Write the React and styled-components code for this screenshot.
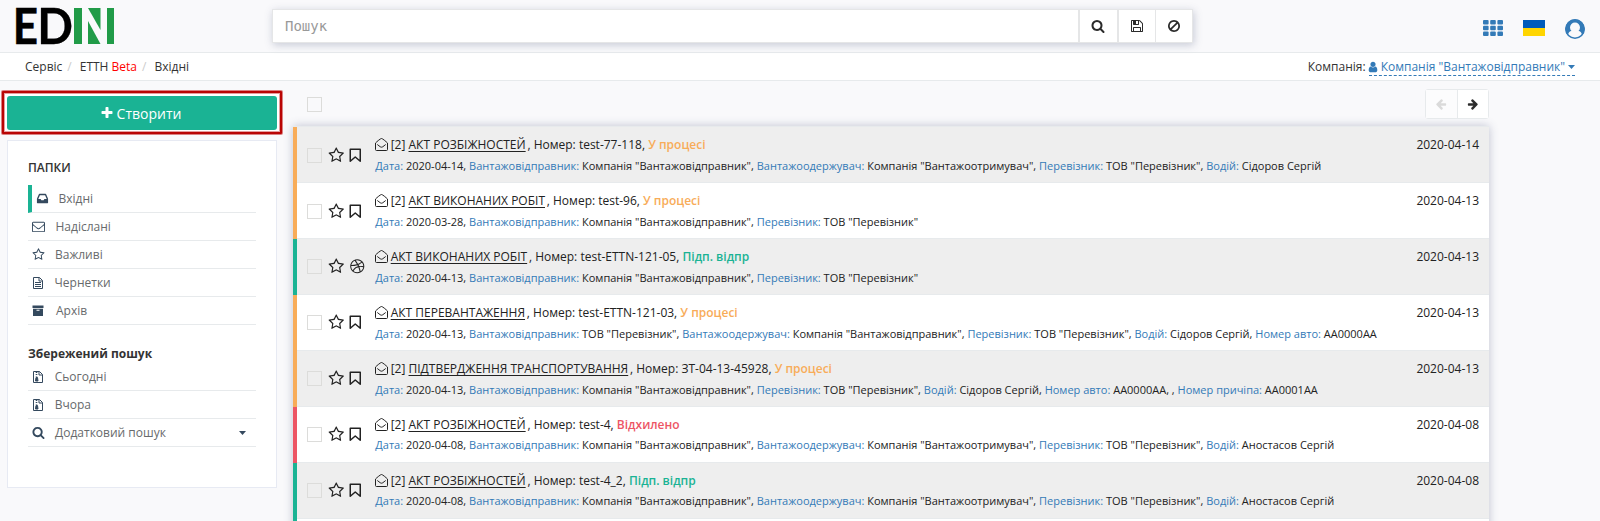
import React from "react";
import styled, { createGlobalStyle, css } from "styled-components";

const GlobalStyle = createGlobalStyle`
  * { box-sizing: border-box; }
  html, body { margin: 0; height: 521px; overflow: hidden; background: #f9f9fb; }
  body { font-family: "Open Sans", "Noto Sans", sans-serif; font-size: 12px; line-height: 1.42857; color: #333; }
  #root { height: 521px; }
  svg { display: block; flex: none; overflow: visible; }
`;

/* ---------- icons ---------- */

const paths = {
  search: "M1216 832q0-185-131.5-316.5t-316.5-131.5-316.5 131.5-131.5 316.5 131.5 316.5 316.5 131.5 316.5-131.5 131.5-316.5zm512 832q0 52-38 90t-90 38q-54 0-90-38l-343-342q-179 124-399 124-143 0-273.5-55.5t-225-150-150-225-55.5-273.5 55.5-273.5 150-225 225-150 273.5-55.5 273.5 55.5 225 150 150 225 55.5 273.5q0 220-124 399l343 343q37 37 37 90z",
  ban: "M1440 893q0-161-87-295l-754 753q137 89 297 89 111 0 211.5-43.5t173.5-116.5 116-174.5 43-212.5zm-999 299l755-754q-135-91-300-91-148 0-273 73t-198 199-73 274q0 162 89 299zm1223-299q0 157-61 300t-163.5 246-245 164-298.5 61-298.5-61-245-164-163.5-246-61-300 61-299.5 163.5-245.5 245-164 298.5-61 298.5 61 245 164 163.5 245.5 61 299.5z",
  plus: "M1600 736v192q0 40-28 68t-68 28h-416v416q0 40-28 68t-68 28h-192q-40 0-68-28t-28-68v-416h-416q-40 0-68-28t-28-68v-192q0-40 28-68t68-28h416v-416q0-40 28-68t68-28h192q40 0 68 28t28 68v416h416q40 0 68 28t28 68z",
  star: "M1201 1004l306-297-422-62-189-382-189 382-422 62 306 297-73 421 378-199 377 199zm527-357q0 22-26 48l-363 354 86 500q1 7 1 20 0 50-41 50-19 0-40-12l-449-236-449 236q-22 12-40 12-21 0-31.5-14.5t-10.5-35.5q0-6 2-20l86-500-364-354q-25-27-25-48 0-37 56-46l502-73 225-455q19-41 49-41t49 41l225 455 502 73q56 9 56 46z",
  floppy: "M512 1536h768v-384h-768v384zm896 0h128v-896q0-14-10-38.5t-20-34.5l-281-281q-10-10-34-20t-39-10v416q0 40-28 68t-68 28h-576q-40 0-68-28t-28-68v-416h-128v1280h128v-416q0-40 28-68t68-28h832q40 0 68 28t28 68v416zm-384-928v-320q0-13-9.5-22.5t-22.5-9.5h-192q-13 0-22.5 9.5t-9.5 22.5v320q0 13 9.5 22.5t22.5 9.5h192q13 0 22.5-9.5t9.5-22.5zm640 32v928q0 40-28 68t-68 28h-1344q-40 0-68-28t-28-68v-1344q0-40 28-68t68-28h928q40 0 88 20t76 48l280 280q28 28 48 76t20 88z",
  envelope: "M1664 1504v-768q-32 36-69 66-268 206-426 338-51 43-83 67t-86.5 48.5-102.5 24.5h-2q-48 0-102.5-24.5t-86.5-48.5-83-67q-158-132-426-338-37-30-69-66v768q0 13 9.5 22.5t22.5 9.5h1472q13 0 22.5-9.5t9.5-22.5zm0-1051v-24.5l-.5-13-3-12.5-5.5-9-9-7.5-14-2.5h-1472q-13 0-22.5 9.5t-9.5 22.5q0 168 147 284 193 152 401 317 6 5 35 29.5t46 37.5 44.5 31.5 50.5 27.5 43 9h2q20 0 43-9t50.5-27.5 44.5-31.5 46-37.5 35-29.5q208-165 401-317 54-43 100.5-115.5t46.5-131.5zm128-37v1088q0 66-47 113t-113 47h-1472q-66 0-113-47t-47-113v-1088q0-66 47-113t113-47h1472q66 0 113 47t47 113z",
  inbox: "M1151 960h316q-1-3-2.5-8t-2.5-8l-212-496h-708l-212 496q-1 2-2.5 8t-2.5 8h316l95 192h320zm513 30v482q0 26-19 45t-45 19h-1408q-26 0-45-19t-19-45v-482q0-62 25-123l238-552q10-25 36.5-42t52.5-17h832q26 0 52.5 17t36.5 42l238 552q25 61 25 123z",
  user: "M1536 1399q0 109-62.5 187t-150.5 78h-854q-88 0-150.5-78t-62.5-187q0-85 8.5-160.5t31.5-152 58.5-131 94-89 134.5-34.5q131 128 313 128t313-128q76 0 134.5 34.5t94 89 58.5 131 31.5 152 8.5 160.5zm-256-887q0 159-112.5 271.5t-271.5 112.5-271.5-112.5-112.5-271.5 112.5-271.5 271.5-112.5 271.5 112.5 112.5 271.5z",
  left: "M1664 896v128q0 53-32.5 90.5t-84.5 37.5h-704l293 294q38 36 38 90t-38 90l-75 76q-37 37-90 37-52 0-91-37l-651-652q-37-37-37-90 0-52 37-91l651-650q38-38 91-38 52 0 90 38l75 74q38 38 38 91t-38 91l-293 293h704q52 0 84.5 37.5t32.5 90.5z",
  dribbble: "M1152 1500q-42-241-140-498h-2l-2 1q-16 6-43 16.5t-101 49-137 82-131 114.5-103 148l-15-11q184 150 418 150 132 0 256-52zm-185-607q-21-49-53-111-311 93-673 93-1 7-1 21 0 124 44 236.5t124 201.5q50-89 123.5-166.5t142.5-124.5 130.5-81 99.5-48l37-13q4-1 13-3.5t13-4.5zm-107-212q-120-213-244-378-138 65-234 186t-128 272q302 0 606-80zm684 319q-210-60-409-29 87 239 128 469 111-75 185-189.5t96-250.5zm-805-741q-1 0-2 1 1-1 2-1zm590 145q-185-164-433-164-76 0-155 19 131 170 246 382 69-26 130-60.5t96.5-61.5 65.5-57 37.5-40.5zm223 485q-3-232-149-410l-1 1q-9 12-19 24.5t-43.5 44.5-71 60.5-100 65-131.5 64.5q25 53 44 95 2 5 6.5 17t7.5 17q36-5 74.5-7t73.5-2 69 1.5 64 4 56.5 5.5 48 6.5 36.5 6 25 4.5zm112 7q0 209-103 385.5t-279.5 279.5-385.5 103-385.5-103-279.5-279.5-103-385.5 103-385.5 279.5-279.5 385.5-103 385.5 103 279.5 279.5 103 385.5z",
};

const Glyph = ({ name, size = 14, flip }) => (
  <svg width={size} height={size} viewBox="0 0 1792 1792" fill="currentColor">
    <path d={paths[name]} transform={flip ? "translate(1792 0) scale(-1 1)" : undefined} />
  </svg>
);

const FileIcon = ({ zip }) => (
  <svg width="12" height="14" viewBox="0 0 12 14" fill="none" stroke="currentColor">
    <path d="M1.5 1.5h6l3 3v8h-9z M7 1.5v3.5h3.5" />
    {zip ? (
      <>
        <path d="M4.5 2v4.500" strokeDasharray="1 1" strokeWidth="1.6" />
        <path d="M4 7.500h1.500l.5 3.500h-2.500z" fill="currentColor" />
      </>
    ) : (
      <path d="M3 6.500h6M3 8.500h6M3 10.500h6" />
    )}
  </svg>
);

const ArchiveIcon = () => (
  <svg width="12" height="12" viewBox="0 0 12 12">
    <path fill="currentColor" d="M.5.500h11v2.500H.500zM1 3.800h10v7.200H1zM4.500 4.800v1h3v-1z" fillRule="evenodd" />
  </svg>
);

const BookmarkIcon = () => (
  <svg width="13" height="15" viewBox="0 0 13 15" fill="none" stroke="currentColor" strokeWidth="1.5">
    <path d="M1.250 1.250h10v12l-5-4.300-5 4.300z" strokeLinejoin="round" />
  </svg>
);

const OpenMailIcon = () => (
  <svg width="13" height="13" viewBox="0 0 13 13" fill="none" stroke="currentColor">
    <path d="M.5 5C2 3.500 5.500.500 6.500.500S11 3.500 12.500 5v6.500a1 1 0 0 1-1 1h-10a1 1 0 0 1-1-1z" />
    <path d="M2.300 6.500C5 8.600 5.600 9.200 6.500 9.200S8 8.600 10.700 6.500" />
  </svg>
);

const Caret = () => (
  <svg width="7" height="4" viewBox="0 0 7 4">
    <path d="M0 0h7L3.500 4z" fill="currentColor" />
  </svg>
);

const GridIcon = () => (
  <svg width="20" height="16" viewBox="0 0 20 16" fill="currentColor">
    {[0, 5.7, 11.4].map((y) =>
      [0, 7.2, 14.4].map((x) => <rect key={x + "-" + y} x={x} y={y} width="5.600" height="4.600" rx="1" />)
    )}
  </svg>
);

const AccountIcon = () => (
  <svg width="20" height="20" viewBox="0 0 20 20">
    <circle cx="10" cy="10" r="9.200" fill="none" stroke="currentColor" strokeWidth="1.500" />
    <path fill="currentColor" fillRule="evenodd" d="M10 .5a9.500 9.500 0 0 0-7.200 15.700c.6-2.400 1.700-4.200 3.700-4.200a5 5 0 1 1 7 0c2 0 3.100 1.800 3.700 4.200A9.500 9.500 0 0 0 10 .5z" />
    <circle cx="10" cy="8.300" r="3.900" fill="#f9f9fb" />
  </svg>
);

const Logo = () => (
  <svg width="100" height="38" viewBox="0 0 100 38" fontFamily="Lato" fontWeight="700" fontSize="50">
    <text transform="translate(-2.300 37) scale(.88 1)" stroke="#000" strokeWidth=".5">E</text>
    <text transform="translate(22.200 37) scale(.94 1)" stroke="#000" strokeWidth=".3">D</text>
    <g fill="#219b48">
      <rect x="59" y="1" width="8" height="36" />
      <path d="M73 14v23h12.500z" />
      <path d="M73 1h12.500v22z" />
      <rect x="92" y="1" width="7" height="36" />
    </g>
  </svg>
);

/* ---------- header ---------- */

const Header = styled.header`
  height: 53px;
  display: flex;
  align-items: flex-start;
  border-bottom: 1px solid #e7eaec;
  padding: 7px 15px 0 15px;
`;

const SearchBar = styled.div`
  display: flex;
  width: 921px;
  height: 34px;
  margin: 2px 0 0 157px;
  border: 1px solid #e5e6e7;
  background: #fff;
  box-shadow: 1px 2px 8px rgba(70, 80, 120, 0.28);
`;

const SearchInput = styled.div`
  flex: 1;
  padding-left: 12px;
  font: 14px/32px "DejaVu Sans Mono", monospace;
  color: #999;
`;

const SearchButton = styled.div`
  width: ${(p) => p.$width}px;
  border-left: ${(p) => (p.$thick ? 2 : 1)}px solid #e5e6e7;
  display: flex;
  align-items: center;
  justify-content: center;
  padding-right: 1px;
  color: #2b2b2b;
`;

const HeaderTools = styled.div`
  margin: 12px 0 0 auto;
  display: flex;
  align-items: flex-start;
  gap: 20px;
  color: #337ab7;
  svg:first-child { margin-top: 1px; }
`;

const Flag = styled.div`
  width: 22px;
  height: 16px;
  margin-top: 1px;
  background: linear-gradient(#005bbb 50%, #ffd500 50%);
`;

const Crumbs = styled.nav`
  height: 28px;
  display: flex;
  align-items: center;
  padding: 0 25px;
  background: #fff;
  border-bottom: 1px solid #e7eaec;
  white-space: pre;
`;

const Slash = styled.span`
  color: #ccc;
  padding: 0 8px 0 5px;
`;

const Beta = styled.span`
  color: red;
`;

const CompanyLabel = styled.span`
  margin-left: auto;
  margin-right: 3px;
`;

const CompanyLink = styled.a`
  display: flex;
  align-items: center;
  height: 18px;
  margin-top: 1px;
  color: #337ab7;
  border-bottom: 1px dashed #337ab7;
  gap: 3px;
  svg:first-child { margin-left: -2px; margin-right: -1px; }
`;

/* ---------- sidebar ---------- */

const Body = styled.main`
  display: flex;
  height: 440px;
  align-items: flex-start;
  overflow: hidden;
`;

const Sidebar = styled.aside`
  width: 293px;
  flex: none;
  padding-top: 10px;
`;

const CreateFrame = styled.div`
  width: 280px;
  height: 43px;
  border: 2px solid #b90504;
  border-radius: 1px;
  box-shadow: 0 0 0 1px rgba(190, 10, 10, 0.5), inset 0 0 0 1px rgba(190, 10, 10, 0.4);
  background: #fff;
  margin-left: 2px;
  padding: 3px 3px 2px;
`;

const CreateButton = styled.button`
  display: flex;
  align-items: center;
  justify-content: center;
  gap: 3px;
  width: 100%;
  height: 34px;
  padding: 0 8px 0 5px;
  border: 0;
  border-radius: 3px;
  background: #1ab394;
  color: #fff;
  font: 14px "Open Sans", sans-serif;
`;

const Folders = styled.section`
  width: 270px;
  height: 348px;
  margin: 6px 0 0 7px;
  padding: 17px 20px 0;
  background: #fff;
  border: 1px solid #e7eaf3;
`;

const FolderTitle = styled.h5`
  height: ${(p) => p.$height}px;
  margin: ${(p) => p.$top || 0}px 0 0;
  font-size: 12px;
  line-height: 20px;
  font-weight: 600;
  ${(p) => p.$bold && css`font-weight: 700;`}
`;

const Folder = styled.div`
  display: flex;
  align-items: center;
  height: 28px;
  border-bottom: 1px solid #e7eaec;
  border-left: ${(p) => (p.$active ? "4px solid #1ab394" : "0")};
  padding-left: 4px;
  padding-right: 10px;
  color: #676a6c;
  > svg:last-child { margin-left: auto; color: #34495e; }
`;

const FolderIcon = styled.span`
  width: ${(p) => p.$width}px;
  color: #34495e;
`;

/* ---------- documents ---------- */

const Content = styled.section`
  width: 1196px;
`;

const Toolbar = styled.div`
  display: flex;
  justify-content: space-between;
  height: 45px;
  padding: 8px 0 0 14px;
`;

const Checkbox = styled.span`
  display: block;
  width: 15px;
  height: 15px;
  flex: none;
  border: 1px solid #dcdcda;
  margin-top: ${(p) => p.$top || 0}px;
`;

const Pager = styled.div`
  display: flex;
  width: 64px;
  height: 30px;
  border: 1px solid #e7eaec;
  border-radius: 3px;
  background: #fff;
`;

const PagerButton = styled.div`
  flex: 1;
  display: flex;
  align-items: center;
  justify-content: center;
  color: ${(p) => (p.$disabled ? "#dadada" : "#2b2b2b")};
  background: ${(p) => (p.$disabled ? "#fcfcfd" : "#fff")};
  & + & { border-left: 1px solid #e7eaec; }
`;

const List = styled.div`
  padding-top: 1px;
  background: #e7eaec;
  box-shadow: 0 0 9px rgba(70, 80, 120, 0.32);
`;

const tones = { orange: "#f8ac59", green: "#1ab394", red: "#ed5565" };

const Row = styled.article`
  display: flex;
  height: 56px;
  border-left: 4px solid ${(p) => tones[p.$tone]};
  background: ${(p) => (p.$shade ? "#eee" : "#fff")};
  box-shadow: inset 0 -1px #e7eaec;
  padding: 0 10px;
  color: #222;
`;

const Marks = styled.div`
  display: flex;
  align-items: center;
  width: 68px;
  height: ${(p) => (p.$raised ? 55 : 57)}px;
  flex: none;
  gap: 6px;
  svg:last-child { margin-left: -2px; }
`;

const Details = styled.div`
  flex: 1;
  white-space: nowrap;
`;

const Headline = styled.div`
  display: flex;
  align-items: center;
  height: 21px;
  margin-top: 7px;
  white-space: pre;
  svg { margin-right: 2.700px; }
`;

const DocLink = styled.a`
  text-decoration: underline;
  text-underline-offset: 2px;
  margin-right: 1.800px;
`;

const Status = styled.span`
  color: ${(p) => tones[p.$tone]};
  font-weight: 600;
`;

const Fields = styled.div`
  font-size: 11px;
  line-height: 20px;
  margin-top: ${(p) => (p.$tight ? 0 : 1)}px;
  padding-left: 0.25px;
`;

const Key = styled.span`
  color: #337ab7;
`;

const RowDate = styled.time`
  line-height: 21px;
  margin-top: 7px;
`;

const D = "Дата", S = "Вантажовідправник", R = "Вантажоодержувач", C = "Перевізник", W = "Водій", A = "Номер авто";
const sender = 'Компанія "Вантажовідправник"', receiver = 'Компанія "Вантажоотримувач"', carrier = 'ТОВ "Перевізник"';

const documents = [
  { tone: "orange", count: "[2] ", title: "АКТ РОЗБІЖНОСТЕЙ", number: "test-77-118", status: "У процесі", date: "2020-04-14",
    fields: [[D, "2020-04-14"], [S, sender], [R, receiver], [C, carrier], [W, "Сідоров Сергій"]] },
  { tone: "orange", count: "[2] ", title: "АКТ ВИКОНАНИХ РОБІТ", number: "test-96", status: "У процесі", date: "2020-04-13",
    fields: [[D, "2020-03-28"], [S, sender], [C, carrier]] },
  { tone: "green", ball: true, title: "АКТ ВИКОНАНИХ РОБІТ", number: "test-ETTN-121-05", status: "Підп. відпр", date: "2020-04-13",
    fields: [[D, "2020-04-13"], [S, sender], [C, carrier]] },
  { tone: "orange", title: "АКТ ПЕРЕВАНТАЖЕННЯ", number: "test-ETTN-121-03", status: "У процесі", date: "2020-04-13",
    fields: [[D, "2020-04-13"], [S, carrier], [R, sender], [C, carrier], [W, "Сідоров Сергій"], [A, "АА0000АА"]] },
  { tone: "orange", count: "[2] ", title: "ПІДТВЕРДЖЕННЯ ТРАНСПОРТУВАННЯ", number: "ЗТ-04-13-45928", status: "У процесі", date: "2020-04-13",
    fields: [[D, "2020-04-13"], [S, sender], [C, carrier], [W, "Сідоров Сергій"], [A, "АА0000АА, "], ["Номер причіпа", "АА0001АА"]] },
  { tone: "red", tight: true, count: "[2] ", title: "АКТ РОЗБІЖНОСТЕЙ", number: "test-4", status: "Відхилено", date: "2020-04-08",
    fields: [[D, "2020-04-08"], [S, sender], [R, receiver], [C, carrier], [W, "Аностасов Сергій"]] },
  { tone: "green", tight: true, count: "[2] ", title: "АКТ РОЗБІЖНОСТЕЙ", number: "test-4_2", status: "Підп. відпр", date: "2020-04-08",
    fields: [[D, "2020-04-08"], [S, sender], [R, receiver], [C, carrier], [W, "Аностасов Сергій"]] },
  { tone: "green" },
];

const DocumentRow = ({ doc, shade, raised }) => (
  <Row $tone={doc.tone} $shade={shade}>
    {doc.title && (
      <>
        <Marks $raised={raised}>
          <Checkbox />
          <Glyph name="star" size={16.5} />
          {doc.ball ? <Glyph name="dribbble" size={16.5} /> : <BookmarkIcon />}
        </Marks>
        <Details>
          <Headline>
            <OpenMailIcon />
            {doc.count}
            <DocLink>{doc.title}</DocLink>
            {", Номер: " + doc.number + ", "}
            <Status $tone={doc.tone}>{doc.status}</Status>
          </Headline>
          <Fields $tight={doc.tight}>
            {doc.fields.map(([key, value], i) => (
              <React.Fragment key={key}>
                {i > 0 && ", "}
                <Key>{key}:</Key> {value}
              </React.Fragment>
            ))}
          </Fields>
        </Details>
        <RowDate>{doc.date}</RowDate>
      </>
    )}
  </Row>
);

export default function App() {
  return (
    <>
      <GlobalStyle />
      <Header>
        <Logo />
        <SearchBar>
          <SearchInput>Пошук</SearchInput>
          <SearchButton $thick $width={39}><Glyph name="search" /></SearchButton>
          <SearchButton $thick $width={38}><Glyph name="floppy" /></SearchButton>
          <SearchButton $width={37}><Glyph name="ban" /></SearchButton>
        </SearchBar>
        <HeaderTools>
          <GridIcon />
          <Flag />
          <AccountIcon />
        </HeaderTools>
      </Header>
      <Crumbs>
        Сервіс<Slash>/</Slash>ЕТТН <Beta>Beta</Beta><Slash>/</Slash>Вхідні
        <CompanyLabel>Компанія:</CompanyLabel>
        <CompanyLink><Glyph name="user" size={12} />Компанія "Вантажовідправник"<Caret /></CompanyLink>
      </Crumbs>
      <Body>
        <Sidebar>
          <CreateFrame>
            <CreateButton><Glyph name="plus" />Створити</CreateButton>
          </CreateFrame>
          <Folders>
            <FolderTitle $height={27}>ПАПКИ</FolderTitle>
            <Folder $active><FolderIcon $width={22.5}><Glyph name="inbox" size={13} /></FolderIcon>Вхідні</Folder>
            <Folder><FolderIcon $width={23.5}><Glyph name="envelope" size={13} /></FolderIcon>Надіслані</Folder>
            <Folder><FolderIcon $width={23}><Glyph name="star" size={13} /></FolderIcon>Важливі</Folder>
            <Folder><FolderIcon $width={22.5}><FileIcon /></FolderIcon>Чернетки</Folder>
            <Folder><FolderIcon $width={24}><ArchiveIcon /></FolderIcon>Архів</Folder>
            <FolderTitle $height={19} $top={19} $bold>Збережений пошук</FolderTitle>
            <Folder><FolderIcon $width={22.7}><FileIcon zip /></FolderIcon>Сьогодні</Folder>
            <Folder><FolderIcon $width={22.7}><FileIcon zip /></FolderIcon>Вчора</Folder>
            <Folder><FolderIcon $width={23}><Glyph name="search" size={13} /></FolderIcon>Додатковий пошук<Caret /></Folder>
          </Folders>
        </Sidebar>
        <Content>
          <Toolbar>
            <Checkbox $top={8} />
            <Pager>
              <PagerButton $disabled><Glyph name="left" size={12} /></PagerButton>
              <PagerButton><Glyph name="left" size={12} flip /></PagerButton>
            </Pager>
          </Toolbar>
          <List>
            {documents.map((doc, i) => <DocumentRow key={i} doc={doc} shade={i % 2 === 0} raised={i > 1} />)}
          </List>
        </Content>
      </Body>
    </>
  );
}
